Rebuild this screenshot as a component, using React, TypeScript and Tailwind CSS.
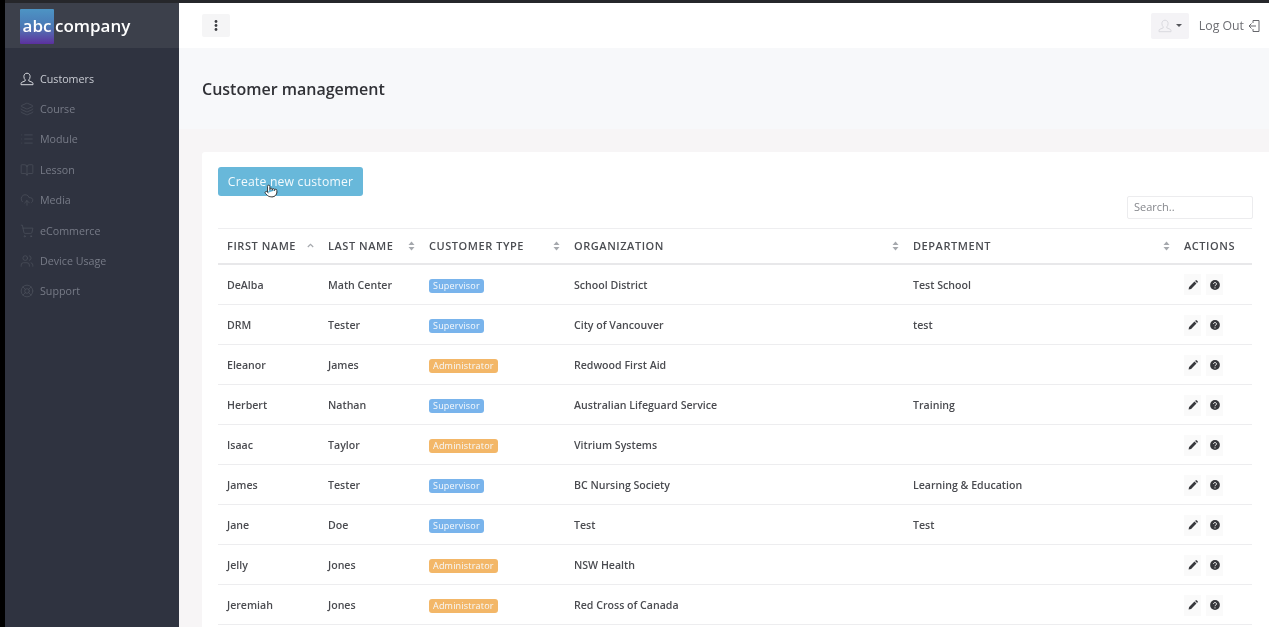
import { Layers, List, BookOpen, CloudUpload, ShoppingCart, Users, LifeBuoy, Pointer } from "lucide-react";

function UserLine({ size = 14, className = "" }: { size?: number; className?: string }) {
  return (
    <svg width={size} height={size} viewBox="0 0 14 14" fill="none" stroke="currentColor" strokeWidth="1" className={className}>
      <path d="M7 1.2C5 1.2 3.9 2.7 3.9 4.6c0 1.4.6 2.6 1.3 3.2v1.1L2 10.2c-.7.3-1 .8-1 1.4v1.1h12v-1.1c0-.6-.3-1.1-1-1.4L8.8 8.9V7.8c.7-.6 1.3-1.8 1.3-3.2 0-1.9-1.1-3.4-3.1-3.4Z" />
    </svg>
  );
}

const nav = [
  { label: "Customers", Icon: UserLine, active: true },
  { label: "Course", Icon: Layers },
  { label: "Module", Icon: List },
  { label: "Lesson", Icon: BookOpen },
  { label: "Media", Icon: CloudUpload },
  { label: "eCommerce", Icon: ShoppingCart },
  { label: "Device Usage", Icon: Users },
  { label: "Support", Icon: LifeBuoy },
];

const rows: [string, string, "S" | "A", string, string][] = [
  ["DeAlba", "Math Center", "S", "School District", "Test School"],
  ["DRM", "Tester", "S", "City of Vancouver", "test"],
  ["Eleanor", "James", "A", "Redwood First Aid", ""],
  ["Herbert", "Nathan", "S", "Australian Lifeguard Service", "Training"],
  ["Isaac", "Taylor", "A", "Vitrium Systems", ""],
  ["James", "Tester", "S", "BC Nursing Society", "Learning & Education"],
  ["Jane", "Doe", "S", "Test", "Test"],
  ["Jelly", "Jones", "A", "NSW Health", ""],
  ["Jeremiah", "Jones", "A", "Red Cross of Canada", ""],
];

function Sort({ up }: { up?: boolean }) {
  return (
    <svg width="7" height="10" viewBox="0 0 7 10" className="shrink-0">
      {up ? (
        <path d="M0.8 6 3.5 3.4 6.2 6" fill="none" stroke="#a5a8ad" strokeWidth="1.2" />
      ) : (
        <>
          <path d="M0.5 4 3.5 0.6 6.5 4Z" fill="#a5a8ad" />
          <path d="M0.5 6 3.5 9.4 6.5 6Z" fill="#a5a8ad" />
        </>
      )}
    </svg>
  );
}

function Th({ label, up, noSort }: { label: string; up?: boolean; noSort?: boolean }) {
  return (
    <th className="p-0 pl-[9px] pr-[5px] pt-[1px] text-left font-semibold">
      <div className="flex items-center justify-between text-[11px] tracking-[0.55px] text-[#4b4d52]">
        <span>{label}</span>
        {!noSort && <Sort up={up} />}
      </div>
    </th>
  );
}

export default function App() {
  return (
    <div className="flex h-[627px] w-[1269px] overflow-hidden bg-[#f7f5f6] text-[11px] text-[#4a4b50] blur-[0.3px] [font-family:'Open_Sans',sans-serif]">
      <div className="w-[5px] shrink-0 bg-black" />
      <aside className="flex w-[174px] shrink-0 flex-col border-t-[3px] border-[#26272b] bg-[#2f3340]">
        <div className="flex h-[45px] items-center bg-[#3c404b] pl-[15px]">
          <div className="mt-[1px] flex h-[35px] w-[34px] items-center justify-center rounded-[1px] bg-gradient-to-b from-[#4d94c4] via-[#4a79b6] to-[#5b2f9e] text-[17px] font-semibold text-white">
            abc
          </div>
          <span className="ml-[1px] text-[17px] font-semibold text-white">company</span>
        </div>
        <nav className="flex flex-col pt-[15.5px]">
          {nav.map(({ label, Icon, active }) => (
            <div key={label} className={`flex h-[30.4px] items-center pl-[15px] ${active ? "text-[#c9ccd3]" : "text-[#777b87]"}`}>
              <Icon size={14} strokeWidth={1.1} className={active ? "text-[#d5d7dc]" : "text-[#50545f]"} />
              <span className="ml-[6px] text-[10.7px]">{label}</span>
            </div>
          ))}
        </nav>
      </aside>
      <main className="flex min-w-0 flex-1 flex-col">
        <header className="flex h-[48px] shrink-0 items-center justify-between border-t-[3px] border-[#26272b] bg-white pl-[23px] pr-[9px]">
          <div className="flex h-[23px] w-[28px] items-center justify-center rounded-[2px] bg-[#f5f5f6]">
            <svg width="4" height="11" viewBox="0 0 4 11" fill="#3c3d42">
              <circle cx="2" cy="1.5" r="1.4" />
              <circle cx="2" cy="5.5" r="1.4" />
              <circle cx="2" cy="9.5" r="1.4" />
            </svg>
          </div>
          <div className="flex items-center">
            <div className="flex h-[26px] w-[38px] items-center justify-center gap-[4px] rounded-[2px] bg-[#f4f3f6]">
              <UserLine size={14} className="text-[#d9d9de]" />
              <span className="border-x-[3px] border-t-[3px] border-x-transparent border-t-[#55565b]" />
            </div>
            <span className="ml-[10px] pt-[1px] text-[12.3px] text-[#6d6e73]">Log Out</span>
            <svg width="12" height="14" viewBox="0 0 12 14" fill="none" stroke="#66676c" strokeWidth="1" className="ml-[4px]">
              <path d="M5 4V1.5h6v11H5V10" />
              <path d="M8 7H1M3.5 4.5 1 7l2.5 2.5" />
            </svg>
          </div>
        </header>
        <section className="flex h-[81px] shrink-0 items-center bg-[#f7f8fa] pl-[23px]">
          <h1 className="text-[16px] font-semibold text-[#303136]">Customer management</h1>
        </section>
        <div className="relative ml-[23px] mt-[23px] flex-1 rounded-tl-[3px] bg-white px-[16px] pt-[15px]">
          <div className="flex h-[29px] w-[145px] items-center justify-center rounded-[3px] bg-[#68b8da] pt-[1px] text-[12.2px] font-medium tracking-[0.2px] text-[#f3fafd]">
            Create new customer
          </div>
          <div className="flex justify-end">
            <div className="flex h-[23px] w-[126px] items-center rounded-[2px] border border-[#ececee] bg-white pl-[6px] text-[11px] text-[#85878c]">
              Search..
            </div>
          </div>
          <table className="mt-[9px] w-[1034px] table-fixed border-collapse">
            <colgroup>
              <col className="w-[101px]" />
              <col className="w-[101px]" />
              <col className="w-[145px]" />
              <col className="w-[339px]" />
              <col className="w-[271px]" />
              <col className="w-[77px]" />
            </colgroup>
            <thead>
              <tr className="h-[35px] border-y border-t-[#eeeef0] border-b-[#e8e8ea] [border-bottom-width:2px]">
                <Th label="FIRST NAME" up />
                <Th label="LAST NAME" />
                <Th label="CUSTOMER TYPE" />
                <Th label="ORGANIZATION" />
                <Th label="DEPARTMENT" />
                <Th label="ACTIONS" noSort />
              </tr>
            </thead>
            <tbody>
              {rows.map(([first, last, type, org, dept]) => (
                <tr key={first} className="h-[40px] border-b border-[#ededef] text-[10.6px] font-semibold text-[#4a4b50] first:h-[41px]">
                  <td className="p-0 pl-[9px] pt-[3px]">{first}</td>
                  <td className="p-0 pl-[9px] pt-[3px]">{last}</td>
                  <td className="p-0 pl-[9px] pt-[3px]">
                    <span className={`inline-block h-[14px] rounded-[3px] px-[4px] text-[9px] font-medium leading-[14px] tracking-[0.2px] text-[#f6f9fc] ${type === "S" ? "bg-[#79b4ec]" : "bg-[#f3b768]"}`}>
                      {type === "S" ? "Supervisor" : "Administrator"}
                    </span>
                  </td>
                  <td className="p-0 pl-[9px] pt-[3px]">{org}</td>
                  <td className="p-0 pl-[9px] pt-[3px]">{dept}</td>
                  <td className="p-0 pl-[9px] pt-[1px]">
                    <div className="flex gap-[5px]">
                      <span className="flex h-[21px] w-[17px] items-center justify-center bg-[#fafafa]">
                        <svg width="10" height="10" viewBox="0 0 9 9" fill="#37383c">
                          <path d="M0.5 8.5 1 6.2 5.8 1.4 7.6 3.2 2.8 8Z" />
                          <path d="M6.4 0.8 7 0.3a.6.6 0 0 1 .8 0l.9.9a.6.6 0 0 1 0 .8l-.5.6Z" />
                        </svg>
                      </span>
                      <span className="flex h-[21px] w-[17px] items-center justify-center bg-[#fafafa]">
                        <svg width="10" height="10" viewBox="0 0 9 9">
                          <circle cx="4.5" cy="4.5" r="4.4" fill="#37383c" />
                          <path d="M3.2 3.5a1.3 1.3 0 1 1 2 1.1c-.5.3-.7.5-.7 1" fill="none" stroke="#fafafa" strokeWidth=".9" />
                          <circle cx="4.5" cy="7" r=".55" fill="#fafafa" />
                        </svg>
                      </span>
                    </div>
                  </td>
                </tr>
              ))}
            </tbody>
          </table>
          <Pointer size={14} strokeWidth={1.4} className="absolute left-[62px] top-[32px] fill-white text-[#222]" />
        </div>
      </main>
    </div>
  );
}
